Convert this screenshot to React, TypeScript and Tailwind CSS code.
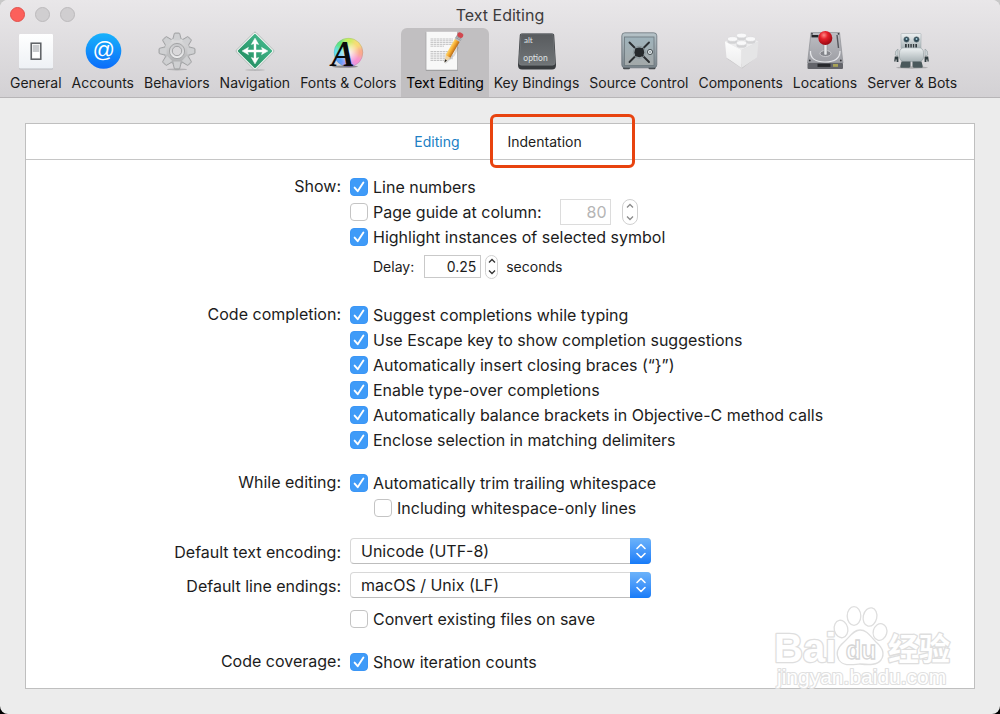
import React, { useState } from 'react';
import clsx from 'clsx';

function GeneralIcon() {
  return (
    <svg viewBox="0 0 40 40" className="size-10" aria-hidden="true">
      <defs>
        <linearGradient id="genPlate" x1="0" y1="0" x2="0" y2="1">
          <stop offset="0" stopColor="#ffffff" />
          <stop offset="1" stopColor="#eef1f5" />
        </linearGradient>
      </defs>
      <rect x="3" y="3.6" width="34" height="35" rx="1" fill="#b9bbc0" />
      <rect x="3" y="3" width="34" height="34.6" rx="1" fill="url(#genPlate)" />
      <rect x="15.2" y="12.2" width="9.6" height="16" fill="#f4f4f4" stroke="#5b5e62" strokeWidth="1.5" />
      <rect x="16.8" y="14" width="6.4" height="7" fill="#c9cbce" />
      <rect x="16.8" y="21" width="6.4" height="5.6" fill="#fff" />
    </svg>
  );
}

function AccountsIcon() {
  return (
    <svg viewBox="0 0 40 40" className="size-10" aria-hidden="true">
      <defs>
        <linearGradient id="accBlue" x1="0" y1="0" x2="0" y2="1">
          <stop offset="0" stopColor="#18b2fb" />
          <stop offset="1" stopColor="#0b6cfa" />
        </linearGradient>
      </defs>
      <circle cx="20.5" cy="20" r="17.8" fill="url(#accBlue)" />
      <text x="20.5" y="26" textAnchor="middle" fontSize="22" fontStyle="italic" fill="#fff" fontFamily="'Liberation Sans', sans-serif">@</text>
    </svg>
  );
}

function BehaviorsIcon() {
  const teeth = [0, 45, 90, 135, 180, 225, 270, 315];
  return (
    <svg viewBox="0 0 40 40" className="size-10" aria-hidden="true">
      <defs>
        <linearGradient id="gearMetal" x1="0" y1="0" x2="0" y2="1">
          <stop offset="0" stopColor="#e0e0e1" />
          <stop offset="1" stopColor="#acadaf" />
        </linearGradient>
        <linearGradient id="gearRing" x1="0" y1="0" x2="0" y2="1">
          <stop offset="0" stopColor="#c4c5c7" />
          <stop offset="1" stopColor="#f0f0f1" />
        </linearGradient>
      </defs>
      <ellipse cx="20" cy="38.4" rx="10" ry="1" fill="#8e8e90" opacity="0.5" />
      {teeth.map((a) => (
        <path key={a} d="M15.6 9 L17.2 2.8 Q17.4 2 18 2 H22 Q22.6 2 22.8 2.8 L24.4 9Z" transform={`rotate(${a} 20 20)`} fill="#c3c4c6" stroke="#98999b" strokeWidth="0.8" />
      ))}
      <circle cx="20" cy="20" r="13" fill="url(#gearMetal)" stroke="#a3a4a6" strokeWidth="0.6" />
      {teeth.map((a) => (
        <path key={a} d="M16.4 9.6 L18 3 H22 L23.6 9.6Z" transform={`rotate(${a} 20 20)`} fill="#cfd0d2" />
      ))}
      <circle cx="20" cy="20" r="7.6" fill="url(#gearRing)" stroke="#999a9c" strokeWidth="0.8" />
      <circle cx="20" cy="20" r="4.7" fill="#d9d8da" stroke="#9c9d9f" strokeWidth="0.9" />
    </svg>
  );
}

function NavigationIcon() {
  return (
    <svg viewBox="0 0 40 40" className="size-10" aria-hidden="true">
      <defs>
        <linearGradient id="navGreen" x1="0" y1="0" x2="0" y2="1">
          <stop offset="0" stopColor="#3fb286" />
          <stop offset="1" stopColor="#289468" />
        </linearGradient>
      </defs>
      <ellipse cx="20" cy="39" rx="10" ry="0.8" fill="#8e8e90" opacity="0.5" />
      <rect x="6.2" y="6.2" width="27.6" height="27.6" rx="1.6" transform="rotate(45 20 20)" fill="#f2f6f4" stroke="#8f9c97" strokeWidth="0.6" />
      <rect x="7.6" y="7.6" width="24.8" height="24.8" rx="1" transform="rotate(45 20 20)" fill="url(#navGreen)" />
      <path d="M20 10.5V29.5M10.5 20H29.5" stroke="#fff" strokeWidth="2.4" />
      {[0, 90, 180, 270].map((a) => (
        <path key={a} d="M20 7.2L23.6 13.4L20 12.2L16.4 13.4Z" transform={`rotate(${a} 20 20)`} fill="#fff" stroke="#fff" strokeWidth="0.6" />
      ))}
    </svg>
  );
}

function FontsIcon() {
  const wedges = [
    { a: 0, c: '#c9ef5e' },
    { a: 45, c: '#f8dc74' },
    { a: 90, c: '#fba98c' },
    { a: 135, c: '#f98fd0' },
    { a: 180, c: '#c59cf8' },
    { a: 225, c: '#5c9cf8' },
    { a: 270, c: '#62dff2' },
    { a: 315, c: '#5ee67c' },
  ];
  return (
    <svg viewBox="0 0 40 40" className="size-10 overflow-visible" aria-hidden="true">
      <defs>
        <clipPath id="wheelClip">
          <circle cx="20.5" cy="21.5" r="14.6" />
        </clipPath>
        <filter id="wheelSoft" x="-20%" y="-20%" width="140%" height="140%">
          <feGaussianBlur stdDeviation="2" />
        </filter>
        <radialGradient id="wheelGlow">
          <stop offset="0" stopColor="#fff" stopOpacity="0.9" />
          <stop offset="1" stopColor="#fff" stopOpacity="0" />
        </radialGradient>
      </defs>
      <g clipPath="url(#wheelClip)">
        <g filter="url(#wheelSoft)">
          {wedges.map((w) => (
            <path key={w.a} d="M20.5 21.5L10.5 -3H30.5Z" transform={`rotate(${w.a} 20.5 21.5)`} fill={w.c} />
          ))}
        </g>
        <circle cx="20.5" cy="21.5" r="11" fill="url(#wheelGlow)" />
      </g>
      <circle cx="20.5" cy="21.5" r="14.3" fill="none" stroke="#6b8f8f" strokeOpacity="0.35" strokeWidth="0.7" />
      <ellipse cx="17" cy="35.6" rx="13" ry="1.2" fill="#000" opacity="0.35" />
      <text x="15" y="35" textAnchor="middle" fontSize="35" fontWeight="700" fontStyle="italic" fill="#0b0b0c" fontFamily="'Liberation Serif', serif">A</text>
    </svg>
  );
}

function TextEditingIcon() {
  const lines = [8, 9.8, 11.6, 13.4, 15.2, 20.5, 22.3, 24.1, 25.9, 27.7, 29.5];
  return (
    <svg viewBox="0 0 40 40" className="size-10" aria-hidden="true">
      <defs>
        <linearGradient id="pencilBody" x1="0" y1="0" x2="1" y2="0">
          <stop offset="0" stopColor="#ffd76c" />
          <stop offset="0.5" stopColor="#f3a62b" />
          <stop offset="1" stopColor="#b4681a" />
        </linearGradient>
      </defs>
      <rect x="0.8" y="1.2" width="32" height="38.4" fill="#8b8b8d" />
      <rect x="1.3" y="0.8" width="31" height="38" fill="#f8f8f8" />
      {lines.map((y) => (
        <path key={y} d={`M5.5 ${y}H${y === 15.2 || y === 29.5 ? 19 : 28}`} stroke="#c4c4c5" strokeWidth="1" strokeDasharray="2.6 0.5" />
      ))}
      <path d="M20 32L29 24L33 16" stroke="#777" strokeWidth="2" opacity="0.25" fill="none" />
      <g transform="translate(19.5 31.5) rotate(30)">
        <path d="M0 0L-2.8 -7.5H2.8Z" fill="#f0d3a0" />
        <path d="M0 0L-1.2 -3H1.2Z" fill="#222" />
        <rect x="-2.8" y="-26" width="5.6" height="19" fill="url(#pencilBody)" />
        <rect x="-3" y="-30" width="6" height="4.5" fill="#b9bcbf" />
        <path d="M-3 -28.7H3M-3 -27.2H3" stroke="#7e8184" strokeWidth="0.6" />
        <rect x="-3" y="-34" width="6" height="4.8" rx="2" fill="#d1474e" />
      </g>
    </svg>
  );
}

function KeyIcon() {
  return (
    <svg viewBox="0 0 40 40" className="size-10" aria-hidden="true">
      <defs>
        <linearGradient id="keyTop" x1="0" y1="0" x2="0" y2="1">
          <stop offset="0" stopColor="#585b5e" />
          <stop offset="1" stopColor="#707477" />
        </linearGradient>
      </defs>
      <path d="M4.5 2.5H35.5Q37 2.5 37.2 4L39 34Q39 38.5 35 38.5H5Q1 38.5 1 34L2.8 4Q3 2.5 4.5 2.5Z" fill="#393c3f" />
      <path d="M5.5 2.8H34.5Q36 2.8 36.2 4.3L38 31.5Q38.2 34.2 35.5 34.2H4.5Q1.8 34.2 2 31.5L3.8 4.3Q4 2.8 5.5 2.8Z" fill="url(#keyTop)" stroke="#85898c" strokeWidth="0.5" />
      <text x="7" y="11.5" fontSize="8" fill="#dfe1e2" fontFamily="Lato, sans-serif">alt</text>
      <text x="18.5" y="29.5" textAnchor="middle" fontSize="8.5" fill="#dfe1e2" fontFamily="Lato, sans-serif">option</text>
    </svg>
  );
}

function SafeIcon() {
  return (
    <svg viewBox="0 0 40 40" className="size-10" aria-hidden="true">
      <defs>
        <linearGradient id="safeBody" x1="0" y1="0" x2="0" y2="1">
          <stop offset="0" stopColor="#b7c4c9" />
          <stop offset="1" stopColor="#79838a" />
        </linearGradient>
        <linearGradient id="safeDoor" x1="0" y1="0" x2="0" y2="1">
          <stop offset="0" stopColor="#9fb3bb" />
          <stop offset="1" stopColor="#a3a8a9" />
        </linearGradient>
      </defs>
      <rect x="4" y="35" width="7" height="3.2" rx="1.2" fill="#3d4144" />
      <rect x="29.5" y="35" width="7" height="3.2" rx="1.2" fill="#3d4144" />
      <rect x="2.8" y="1.8" width="35" height="35" rx="3" fill="url(#safeBody)" stroke="#69747a" strokeWidth="0.8" />
      <rect x="5.5" y="6" width="29.5" height="28.5" fill="url(#safeDoor)" stroke="#6c777d" strokeWidth="0.8" />
      <path d="M10.5 11.5L30 31M30 11.5L10.5 31" stroke="#2b2e31" strokeWidth="1.9" strokeLinecap="round" />
      <circle cx="20.3" cy="21.3" r="6" fill="none" stroke="#8b979c" strokeWidth="1" />
      <circle cx="20.3" cy="21.3" r="4.9" fill="#25292c" />
      <circle cx="31" cy="21" r="2.6" fill="#dde4e7" stroke="#4b5357" strokeWidth="1" />
      <circle cx="31" cy="21" r="1" fill="#9aa4a8" />
    </svg>
  );
}

function BrickIcon() {
  return (
    <svg viewBox="0 0 40 40" className="size-10" aria-hidden="true">
      <defs>
        <linearGradient id="brickLeft" x1="0" y1="0" x2="0" y2="1">
          <stop offset="0" stopColor="#fdfdfd" />
          <stop offset="1" stopColor="#ececed" />
        </linearGradient>
      </defs>
      <path d="M21 37.5L5 27L20 33L36 26Z" fill="#8a8a8c" opacity="0.3" />
      <path d="M4 10.5L20.5 3L37.5 10.5L20.5 19Z" fill="#ededee" />
      <path d="M4 10.5L20.5 19V37L5.5 26.5Z" fill="url(#brickLeft)" />
      <path d="M37.5 10.5L20.5 19V37L36 26.5Z" fill="#e5e5e6" />
      {[[20.5, 4.5], [11.5, 8], [29.5, 8], [20.5, 12]].map(([x, y]) => (
        <g key={`${x}-${y}`}>
          <path d={`M${x - 5} ${y}V${y + 2.5}A5 2.3 0 0 0 ${x + 5} ${y + 2.5}V${y}Z`} fill="#d3d3d5" />
          <ellipse cx={x} cy={y} rx="5" ry="2.3" fill="#f9f9fa" stroke="#d5d5d7" strokeWidth="0.5" />
        </g>
      ))}
    </svg>
  );
}

function LocationsIcon() {
  return (
    <svg viewBox="0 0 40 40" className="size-10" aria-hidden="true">
      <defs>
        <linearGradient id="driveTop" x1="0" y1="0" x2="0" y2="1">
          <stop offset="0" stopColor="#bdbec3" />
          <stop offset="1" stopColor="#9d9ea4" />
        </linearGradient>
        <radialGradient id="redBall" cx="0.4" cy="0.3" r="0.7">
          <stop offset="0" stopColor="#ff8a86" />
          <stop offset="0.4" stopColor="#e5202a" />
          <stop offset="1" stopColor="#980812" />
        </radialGradient>
      </defs>
      <path d="M6 1.5H34.5L38 32H2.5Z" fill="url(#driveTop)" stroke="#85868c" strokeWidth="0.6" />
      <rect x="2.5" y="32" width="35.5" height="6" rx="1" fill="#63646a" />
      <rect x="12.5" y="32.7" width="13" height="3.2" fill="#27282c" />
      <rect x="28" y="33" width="5" height="2.8" fill="#a9a356" />
      <rect x="6.5" y="4" width="7" height="2.4" fill="#25262a" />
      <path d="M5.5 20C5 27 10 31 20 31C30 31 35 27 35 20" fill="none" stroke="#e5e6e9" strokeWidth="1.2" />
      <path d="M32 4L33.5 17" stroke="#55565c" strokeWidth="1.4" />
      <ellipse cx="20.5" cy="22.5" rx="5.5" ry="3" fill="#85868c" stroke="#dfe0e3" strokeWidth="0.7" />
      <rect x="19" y="12" width="3" height="12" rx="1" fill="#e9eaec" stroke="#7f8086" strokeWidth="0.5" />
      {[[7, 2.8], [33.5, 2.8], [4.8, 29.5], [35.8, 29.5]].map(([x, y]) => (
        <circle key={`${x}-${y}`} cx={x} cy={y} r="0.9" fill="#333439" />
      ))}
      <circle cx="20.3" cy="7" r="7" fill="url(#redBall)" />
    </svg>
  );
}

function BotIcon() {
  return (
    <svg viewBox="0 0 40 40" className="size-10" aria-hidden="true">
      <defs>
        <linearGradient id="botBody" x1="0" y1="0" x2="0" y2="1">
          <stop offset="0" stopColor="#edf1f2" />
          <stop offset="1" stopColor="#a9b3b6" />
        </linearGradient>
      </defs>
      <ellipse cx="20" cy="36.5" rx="16" ry="1.2" fill="#7f7f82" opacity="0.5" />
      <rect x="9" y="2.5" width="20" height="15" rx="0.8" fill="url(#botBody)" stroke="#9aa5a8" strokeWidth="0.5" />
      <circle cx="14.5" cy="8.5" r="2.7" fill="#2a4450" stroke="#75848a" strokeWidth="0.6" />
      <circle cx="24.5" cy="8.5" r="2.7" fill="#2a4450" stroke="#75848a" strokeWidth="0.6" />
      <circle cx="14.5" cy="8" r="1" fill="#a5cfdb" />
      <circle cx="24.5" cy="8" r="1" fill="#a5cfdb" />
      <rect x="13" y="13" width="12" height="4" fill="#31393c" />
      <path d="M15.3 13V17M17.8 13V17M20.3 13V17M22.8 13V17" stroke="#dfe5e7" strokeWidth="0.9" />
      <path d="M6 18Q3 19 3.2 24L6 25ZM33 18Q36 19 35.8 24L33 25Z" fill="#ccd4d6" stroke="#879194" strokeWidth="0.5" />
      <rect x="7.5" y="16.8" width="24" height="13.8" rx="4.5" fill="url(#botBody)" stroke="#8f9a9d" strokeWidth="0.6" />
      <path d="M2.8 25.5H6.4V31H4.6V28.6H3.6V30.5H2.2ZM36.2 25.5H32.6V31H34.4V28.6H35.4V30.5H36.8Z" fill="#2f3c3f" />
      <path d="M9.5 30.5H18.5V35Q18.5 36.8 17 36.8H9Q8 36.8 8.3 35ZM20.5 30.5H29.5L30.7 35Q31 36.8 30 36.8H22Q20.5 36.8 20.5 35Z" fill="#4b595c" />
    </svg>
  );
}

const panes = [
  { label: 'General', icon: GeneralIcon },
  { label: 'Accounts', icon: AccountsIcon },
  { label: 'Behaviors', icon: BehaviorsIcon },
  { label: 'Navigation', icon: NavigationIcon },
  { label: 'Fonts & Colors', icon: FontsIcon },
  { label: 'Text Editing', icon: TextEditingIcon },
  { label: 'Key Bindings', icon: KeyIcon },
  { label: 'Source Control', icon: SafeIcon },
  { label: 'Components', icon: BrickIcon },
  { label: 'Locations', icon: LocationsIcon },
  { label: 'Server & Bots', icon: BotIcon },
];

function Check({ label, defaultChecked = false }: { label: string; defaultChecked?: boolean }) {
  return (
    <label className="flex h-[25px] items-center gap-[5px]">
      <span className="grid size-[18px] shrink-0">
        <input
          type="checkbox"
          defaultChecked={defaultChecked}
          className="peer col-start-1 row-start-1 size-[18px] appearance-none rounded-[4px] border border-[#c4c4c4] bg-white checked:border-[#3b96f6] checked:bg-[#3f9bf8]"
        />
        <svg viewBox="0 0 18 18" className="pointer-events-none col-start-1 row-start-1 hidden size-[18px] peer-checked:block" aria-hidden="true">
          <path d="M4.6 9.6L7.7 13.2L13.4 4.6" fill="none" stroke="#fff" strokeWidth="1.9" strokeLinecap="round" strokeLinejoin="round" />
        </svg>
      </span>
      {label}
    </label>
  );
}

function Stepper({ name, disabled = false, onStep }: { name: string; disabled?: boolean; onStep: (dir: number) => void }) {
  return (
    <div className={clsx('flex flex-col rounded-full border border-[#d0d0d0] bg-white', disabled ? 'h-[26px] w-4 text-[#8a8a8a]' : 'h-6 w-[13px] text-[#333]')}>
      <button type="button" disabled={disabled} aria-label={`Increase ${name}`} onClick={() => onStep(1)} className="flex flex-1 items-center justify-center">
        <svg viewBox="0 0 8 6" className="h-1.5 w-2" aria-hidden="true">
          <path d="M1 4.5L4 1.5L7 4.5" fill="none" stroke="currentColor" strokeWidth="1.3" />
        </svg>
      </button>
      <button type="button" disabled={disabled} aria-label={`Decrease ${name}`} onClick={() => onStep(-1)} className="flex flex-1 items-center justify-center">
        <svg viewBox="0 0 8 6" className="h-1.5 w-2" aria-hidden="true">
          <path d="M1 1.5L4 4.5L7 1.5" fill="none" stroke="currentColor" strokeWidth="1.3" />
        </svg>
      </button>
    </div>
  );
}

function Popup({ id, options }: { id: string; options: string[] }) {
  return (
    <div className="grid h-[26px] w-[301px]">
      <select id={id} className="col-start-1 row-start-1 appearance-none rounded-[4px] border border-[#d8d8d8] border-b-[#bdbdbd] bg-white pr-8 pl-2.5">
        {options.map((o) => (
          <option key={o}>{o}</option>
        ))}
      </select>
      <span className="pointer-events-none col-start-1 row-start-1 flex w-[21px] items-center justify-center justify-self-end rounded-r-[4px] bg-linear-to-b from-[#6cb3fa] to-[#157bf8]">
        <svg viewBox="0 0 12 18" className="h-[18px] w-3" aria-hidden="true">
          <path d="M2 6.5L6 2.5L10 6.5M2 11.5L6 15.5L10 11.5" fill="none" stroke="#fff" strokeWidth="1.6" strokeLinecap="round" strokeLinejoin="round" />
        </svg>
      </span>
    </div>
  );
}

function Row({ label, htmlFor, children }: { label?: string; htmlFor?: string; children: React.ReactNode }) {
  return (
    <div className={clsx('grid grid-cols-[1fr_2fr]', htmlFor && 'items-end')}>
      <div className="pr-px text-right leading-6">
        {label && (htmlFor ? <label htmlFor={htmlFor}>{label}</label> : <span>{label}</span>)}
      </div>
      <div className="pl-2">{children}</div>
    </div>
  );
}

function Watermark() {
  return (
    <svg viewBox="0 0 190 100" className="pointer-events-none absolute right-[19px] -bottom-1 h-[100px] w-[200px]" aria-hidden="true">
      <g fill="#fff" stroke="#dedede" strokeWidth="1.3">
        <ellipse cx="81" cy="37" rx="6.8" ry="8.8" transform="rotate(-12 81 37)" />
        <ellipse cx="94" cy="24" rx="6.8" ry="9.3" />
        <ellipse cx="110" cy="25" rx="6.8" ry="9.3" transform="rotate(12 110 25)" />
        <ellipse cx="120" cy="40" rx="6.8" ry="8.5" transform="rotate(15 120 40)" />
        <path d="M100 38C107 38 110 44 116 50C123 56 125 62 121 68C117 73 110 73 100 72C90 73 83 74 79 68C75 61 78 55 84 50C90 45 93 38 100 38Z" />
      </g>
      <g stroke="#dedede" strokeWidth="2.6" paintOrder="stroke" strokeLinejoin="round" fill="#fff" fontWeight="700">
        <text x="14" y="70" fontSize="40" fontFamily="'Liberation Sans', sans-serif">Bai</text>
        <text x="128" y="68" fontSize="31" fontFamily="'Noto Sans CJK SC', sans-serif">经验</text>
      </g>
      <text x="101" y="67" textAnchor="middle" fontSize="25" fill="#fff" stroke="#d6d6d6" strokeWidth="1.3" fontWeight="700" fontFamily="'Liberation Sans', sans-serif">du</text>
      <text x="17" y="92" fontSize="21" fill="#fff" stroke="#e0e0e0" strokeWidth="2.2" paintOrder="stroke" strokeLinejoin="round" fontFamily="'Liberation Sans', sans-serif">jingyan.baidu.com</text>
    </svg>
  );
}

export default function App() {
  const [pane, setPane] = useState('Text Editing');
  const [tab, setTab] = useState('Editing');
  const [delay, setDelay] = useState(0.25);

  return (
    <div className="min-h-screen bg-linear-to-b from-[#c8c8c8] from-50% to-black to-50% font-[Inter,sans-serif] text-base text-[#1c1c1c]">
      <div className="flex min-h-screen flex-col rounded-lg bg-[#ececec]">
        <header className="rounded-t-lg border-b border-[#b7b5b7] bg-linear-to-b from-[#e9e7e9] to-[#d3d1d4]">
          <div className="grid h-7 grid-cols-[1fr_auto_1fr] items-center px-2.5">
            <div className="flex gap-2.5">
              <button type="button" aria-label="Close" className="size-[15px] rounded-full border border-[#e2504a] bg-[#fc605b]" />
              <button type="button" aria-label="Minimize" className="size-[15px] rounded-full border border-[#bcbabc] bg-[#d0ced0]" />
              <button type="button" aria-label="Zoom" className="size-[15px] rounded-full border border-[#bcbabc] bg-[#d0ced0]" />
            </div>
            <h1 className="pt-px text-base text-[#3d3b3d]">Text Editing</h1>
          </div>
          <nav className="flex pl-[5px] text-sm">
            {panes.map((p) => (
              <button
                key={p.label}
                type="button"
                onClick={() => setPane(p.label)}
                className={clsx(
                  'flex flex-col items-center rounded-t-md px-[5px] pt-[3px] pb-[3px] whitespace-nowrap',
                  pane === p.label && 'bg-[#c1bfc1] text-black',
                )}
              >
                <p.icon />
                <span className="leading-[23px]">{p.label}</span>
              </button>
            ))}
          </nav>
        </header>

        <main className="relative mx-[25px] mt-[25px] mb-[25px] flex-1 border border-[#bfbfbf] bg-white">
          <div role="tablist" className="flex h-9 justify-center gap-12 border-b border-[#c6c6c6] pr-1 text-sm">
            <button type="button" role="tab" aria-selected={tab === 'Editing'} onClick={() => setTab('Editing')} className={clsx(tab === 'Editing' && 'text-[#2080c4]')}>
              Editing
            </button>
            <button type="button" role="tab" aria-selected={tab === 'Indentation'} onClick={() => setTab('Indentation')} className={clsx('relative', tab === 'Indentation' && 'text-[#2080c4]')}>
              Indentation
              <span className="pointer-events-none absolute -top-2.5 -left-[18px] h-[54px] w-[145px] rounded-md border-[3px] border-[#e8430f]" />
            </button>
          </div>

          <form className="flex flex-col gap-[18px] pt-[14px] pb-3">
            <Row label="Show:">
              <Check label="Line numbers" defaultChecked />
              <div className="flex h-[25px] items-center">
                <Check label="Page guide at column:" />
                <input aria-label="Page guide column" disabled defaultValue="80" className="mr-[11px] ml-[19px] h-[26px] w-[51px] border border-[#dcdcdc] bg-white pr-1 text-right text-[#b5b5b5]" />
                <Stepper name="column" disabled onStep={() => {}} />
              </div>
              <Check label="Highlight instances of selected symbol" defaultChecked />
              <div className="flex h-[35px] items-center pl-[23px] text-sm">
                <label htmlFor="delay">Delay:</label>
                <input id="delay" value={delay.toFixed(2)} onChange={(e) => setDelay(Number(e.target.value) || 0)} className="mr-1 ml-2.5 h-[23px] w-[57px] border border-[#c9c9c9] bg-white pr-1 text-right" />
                <Stepper name="delay" onStep={(d) => setDelay(Math.max(0, delay + d * 0.05))} />
                <span className="ml-2">seconds</span>
              </div>
            </Row>

            <Row label="Code completion:">
              <Check label="Suggest completions while typing" defaultChecked />
              <Check label="Use Escape key to show completion suggestions" defaultChecked />
              <Check label="Automatically insert closing braces (“}”)" defaultChecked />
              <Check label="Enable type-over completions" defaultChecked />
              <Check label="Automatically balance brackets in Objective-C method calls" defaultChecked />
              <Check label="Enclose selection in matching delimiters" defaultChecked />
            </Row>

            <Row label="While editing:">
              <Check label="Automatically trim trailing whitespace" defaultChecked />
              <div className="pl-6">
                <Check label="Including whitespace-only lines" />
              </div>
            </Row>

            <div className="flex flex-col gap-2">
              <Row label="Default text encoding:" htmlFor="encoding">
                <Popup id="encoding" options={['Unicode (UTF-8)', 'Unicode (UTF-16)', 'Western (ASCII)']} />
              </Row>
              <Row label="Default line endings:" htmlFor="endings">
                <Popup id="endings" options={['macOS / Unix (LF)', 'Windows (CRLF)', 'Classic Mac OS (CR)']} />
              </Row>
              <Row>
                <Check label="Convert existing files on save" />
              </Row>
            </div>

            <Row label="Code coverage:">
              <Check label="Show iteration counts" defaultChecked />
            </Row>
          </form>
          <Watermark />
        </main>
      </div>
    </div>
  );
}
